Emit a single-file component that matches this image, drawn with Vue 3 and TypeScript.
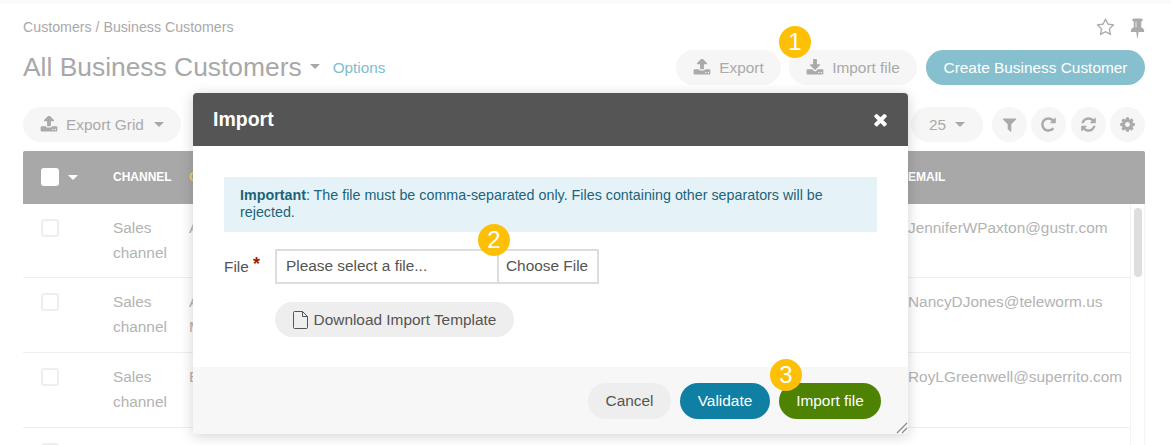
<script setup lang="ts">
const icons: Record<string, string> = {
  upload: 'M1344 1344q0-26-19-45t-45-19-45 19-19 45 19 45 45 19 45-19 19-45zm256 0q0-26-19-45t-45-19-45 19-19 45 19 45 45 19 45-19 19-45zm128-224v320q0 40-28 68t-68 28h-1472q-40 0-68-28t-28-68v-320q0-40 28-68t68-28h427q21 56 70.5 92t110.5 36h256q61 0 110.5-36t70.5-92h427q40 0 68 28t28 68zm-325-648q-17 40-59 40h-256v448q0 26-19 45t-45 19h-256q-26 0-45-19t-19-45v-448h-256q-42 0-59-40-17-39 14-69l448-448q19-19 45-19t45 19l448 448q31 30 14 69z',
  download: 'M1344 1344q0-26-19-45t-45-19-45 19-19 45 19 45 45 19 45-19 19-45zm256 0q0-26-19-45t-45-19-45 19-19 45 19 45 45 19 45-19 19-45zm128-224v320q0 40-28 68t-68 28h-1472q-40 0-68-28t-28-68v-320q0-40 28-68t68-28h465l135 136q58 56 136 56t136-56l136-136h464q40 0 68 28t28 68zm-325-569q17 41-14 70l-448 448q-18 19-45 19t-45-19l-448-448q-31-29-14-70 17-39 59-39h256v-448q0-26 19-45t45-19h256q26 0 45 19t19 45v448h256q42 0 59 39z',
  filter: 'M1595 295q17 41-14 70l-493 493v742q0 42-39 59-13 5-25 5-27 0-45-19l-256-256q-19-19-19-45v-486l-493-493q-31-29-14-70 17-39 59-39h1280q42 0 59 39z',
  repeat: 'M1664 256v448q0 26-19 45t-45 19h-448q-42 0-59-40-17-39 14-69l138-138q-148-137-349-137-104 0-198.5 40.5t-163.5 109.5-109.5 163.5-40.5 198.5 40.5 198.5 109.5 163.5 163.5 109.5 198.5 40.5q119 0 225-52t179-147q7-10 23-12 15 0 25 9l137 138q9 8 9.5 20.5t-7.5 22.5q-109 132-264 204.5t-327 72.5q-156 0-298-61t-245-164-164-245-61-298 61-298 164-245 245-164 298-61q147 0 284.5 55.5t244.5 156.5l130-129q29-31 70-14 39 17 39 59z',
  refresh: 'M1639 1056q0 5-1 7-64 268-268 434.5t-478 166.5q-146 0-282.5-55t-243.5-157l-129 129q-19 19-45 19t-45-19-19-45v-448q0-26 19-45t45-19h448q26 0 45 19t19 45-19 45l-137 137q71 66 161 102t187 36q134 0 250-65t186-179q11-17 53-117 8-23 30-23h192q13 0 22.5 9.5t9.5 22.5zm25-800v448q0 26-19 45t-45 19h-448q-26 0-45-19t-19-45 19-45l138-138q-148-137-349-137-134 0-250 65t-186 179q-11 17-53 117-8 23-30 23h-199q-13 0-22.5-9.5t-9.5-22.5v-7q65-268 270-434.5t480-166.5q146 0 284 55.5t245 156.5l130-129q19-19 45-19t45 19 19 45z',
  cog: 'M1152 896q0-106-75-181t-181-75-181 75-75 181 75 181 181 75 181-75 75-181zm512-109v222q0 12-8 23t-20 13l-185 28q-19 54-39 91 35 50 107 138 10 12 10 25t-9 23q-27 37-99 108t-94 71q-12 0-26-9l-138-108q-44 23-91 38-16 136-29 186-7 28-36 28h-222q-14 0-24.5-8.5t-11.5-21.5l-28-184q-49-16-90-37l-141 107q-10 9-25 9-14 0-25-11-126-114-165-168-7-10-7-23 0-12 8-23 15-21 51-66.5t54-70.5q-27-50-41-99l-183-27q-13-2-21-12.5t-8-23.5v-222q0-12 8-23t19-13l186-28q14-46 39-92-40-57-107-138-10-12-10-24 0-10 9-23 26-36 98.5-107.5t94.5-71.5q13 0 26 10l138 107q44-23 91-38 16-136 29-186 7-28 36-28h222q14 0 24.5 8.5t11.5 21.5l28 184q49 16 90 37l142-107q9-9 24-9 13 0 25 10 129 119 165 170 7 8 7 22 0 12-8 23-15 21-51 66.5t-54 70.5q26 50 41 98l183 28q13 2 21 12.5t8 23.5z',
  times: 'M1490 1322q0 40-28 68l-136 136q-28 28-68 28t-68-28l-294-294-294 294q-28 28-68 28t-68-28l-136-136q-28-28-28-68t28-68l294-294-294-294q-28-28-28-68t28-68l136-136q28-28 68-28t68 28l294 294 294-294q28-28 68-28t68 28l136 136q28 28 28 68t-28 68l-294 294 294 294q28 28 28 68z',
  star: 'M1201 1004l306-297-422-62-189-382-189 382-422 62 306 297-73 421 378-199 377 199zm527-357q0 22-26 48l-363 354 86 500q1 7 1 20 0 50-41 50-19 0-40-12l-449-236-449 236q-22 12-40 12-21 0-31.5-14.5t-10.5-35.5q0-6 2-20l86-500-364-354q-25-27-25-48 0-37 56-46l502-73 225-455q19-41 49-41t49 41l225 455 502 73q56 9 56 46z',
  pin: 'M800 864v-448q0-14-9-23t-23-9-23 9-9 23v448q0 14 9 23t23 9 23-9 9-23zm672 352q0 26-19 45t-45 19h-429l-51 483q-2 12-10.5 20.5t-20.5 8.5h-1q-27 0-32-27l-76-485h-404q-26 0-45-19t-19-45q0-123 78.5-221.5t177.5-98.5v-512q-52 0-90-38t-38-90 38-90 90-38h640q52 0 90 38t38 90-38 90-90 38v512q99 0 177.5 98.5t78.5 221.5z'
}

const toolIcons = ['filter', 'repeat', 'refresh', 'cog']

interface Customer {
  company: string[]
  email: string
}

const customers: Customer[] = [
  { company: ['Abbott'], email: 'JenniferWPaxton@gustr.com' },
  { company: ['Acme', 'Media'], email: 'NancyDJones@teleworm.us' },
  { company: ['Evans'], email: 'RoyLGreenwell@superrito.com' },
  { company: [], email: '' }
]
</script>

<template>
  <div class="app">
    <div class="page">
      <div class="top">
        <div class="crumbs">Customers / Business Customers</div>
        <div class="top-icons">
          <svg class="ico star" viewBox="0 0 1792 1792"><path :d="icons.star" /></svg>
          <svg class="ico pin" viewBox="0 0 1792 1792"><path :d="icons.pin" /></svg>
        </div>
      </div>

      <div class="head">
        <h1>All Business Customers</h1>
        <span class="caret title-caret"></span>
        <a class="options">Options</a>
        <div class="head-actions">
          <button class="btn btn-export">
            <svg class="ico" viewBox="0 0 1792 1792"><path :d="icons.upload" /></svg>
            Export
          </button>
          <button class="btn btn-import">
            <svg class="ico" viewBox="0 0 1792 1792"><path :d="icons.download" /></svg>
            Import file
          </button>
          <button class="btn btn-create">Create Business Customer</button>
        </div>
      </div>

      <div class="toolbar">
        <button class="btn btn-grid">
          <svg class="ico" viewBox="0 0 1792 1792"><path :d="icons.upload" /></svg>
          Export Grid
          <span class="caret"></span>
        </button>
        <div class="tools">
          <button class="btn btn-size">25 <span class="caret"></span></button>
          <button v-for="name in toolIcons" :key="name" class="btn-round">
            <svg class="ico" viewBox="0 0 1792 1792"><path :d="icons[name]" /></svg>
          </button>
        </div>
      </div>

      <div class="grid">
        <div class="grid-head">
          <div class="col-check">
            <span class="check check-head"></span>
            <span class="caret caret-white"></span>
          </div>
          <div class="col-channel">CHANNEL</div>
          <div class="col-company">COMPANY</div>
          <div class="col-email">EMAIL</div>
        </div>
        <div class="grid-body">
          <div class="rows">
            <div v-for="(c, i) in customers" :key="i" class="row">
              <div class="col-check"><span class="check"></span></div>
              <div v-if="c.email" class="col-channel">Sales channel</div>
              <div class="col-company">
                <div v-for="line in c.company" :key="line">{{ line }}</div>
              </div>
              <div class="col-email">{{ c.email }}</div>
            </div>
          </div>
          <div class="scroll"><div class="thumb"></div></div>
        </div>
      </div>
    </div>

    <div class="modal">
      <div class="modal-head">
        <span>Import</span>
        <svg class="ico close" viewBox="0 0 1792 1792"><path :d="icons.times" /></svg>
      </div>
      <div class="modal-body">
        <div class="alert">
          <strong>Important</strong>: The file must be comma-separated only. Files containing other separators will be rejected.
        </div>
        <div class="file-row">
          <label>File <span class="req">*</span></label>
          <div class="file-input">
            <div class="file-name">Please select a file...</div>
            <div class="file-choose">Choose File</div>
          </div>
        </div>
        <button class="btn-template">
          <svg class="file-ico" viewBox="0 0 15 18">
            <path d="M.5 1.5a1 1 0 0 1 1-1h8l5 5v11a1 1 0 0 1-1 1h-12a1 1 0 0 1-1-1z M9.5.5v5h5" />
          </svg>
          Download Import Template
        </button>
      </div>
      <div class="modal-foot">
        <button class="foot-btn cancel">Cancel</button>
        <button class="foot-btn validate">Validate</button>
        <button class="foot-btn import">Import file</button>
        <svg class="grip" viewBox="0 0 12 12">
          <path d="M1 11 11 1 M6 11 11 6" />
        </svg>
      </div>
    </div>

    <span class="badge badge-1">1</span>
    <span class="badge badge-2">2</span>
    <span class="badge badge-3">3</span>
  </div>
</template>

<style>
html,
body {
  margin: 0;
  background: #fff;
}
</style>

<style scoped>
.app {
  position: relative;
  width: 1171px;
  height: 445px;
  overflow: hidden;
  background: #fff;
  font-family: "Liberation Sans", Arial, sans-serif;
  font-size: 15.4px;
}

button {
  font-family: inherit;
  border: none;
  padding: 0;
}

.page {
  border-top: 4px solid #fafafa;
  padding: 0 26px 0 23px;
  color: #b0b0b0;
}

.ico {
  fill: currentColor;
  flex: none;
}

.top {
  display: flex;
  justify-content: space-between;
  align-items: center;
  height: 46px;
}

.crumbs {
  font-size: 14.2px;
  color: #a9a9a9;
}

.top-icons {
  display: flex;
  align-items: center;
  gap: 12px;
  color: #ababab;
}

.star {
  width: 19px;
  height: 19px;
}

.pin {
  width: 21px;
  height: 21px;
  margin-right: -3px;
}

.head {
  display: flex;
  align-items: center;
  height: 35px;
}

h1 {
  margin: 0;
  font-size: 26.4px;
  font-weight: 400;
  color: #a8a8a8;
}

.caret {
  display: inline-block;
  width: 0;
  height: 0;
  border-left: 5.5px solid transparent;
  border-right: 5.5px solid transparent;
  border-top: 5.5px solid #a8a8a8;
}

.title-caret {
  margin: 0 0 2px 8px;
}

.options {
  margin-left: 13px;
  font-size: 15.3px;
  color: #7fbdd1;
}

.head-actions {
  margin-left: auto;
  display: flex;
  gap: 8px;
}

.btn {
  display: flex;
  align-items: center;
  justify-content: center;
  height: 35px;
  border-radius: 18px;
  background: #f6f6f6;
  color: #aaa;
  font-size: 15.4px;
}

.btn .ico {
  width: 18px;
  height: 18px;
}

.btn-export {
  width: 105px;
  gap: 8px;
}

.btn-import {
  width: 128px;
  gap: 8px;
}

.btn-create {
  width: 219px;
  margin-left: 1px;
  background: #86bfce;
  color: #fff;
}

.toolbar {
  display: flex;
  justify-content: space-between;
  align-items: center;
  margin-top: 22px;
}

.btn-grid {
  width: 158px;
  gap: 8px;
}

.btn-grid .caret {
  margin-left: 2px;
}

.tools {
  display: flex;
  gap: 4.33px;
}

.btn-size {
  width: 72px;
  gap: 9px;
  margin-right: 4.67px;
}

.btn-round {
  display: flex;
  align-items: center;
  justify-content: center;
  width: 35px;
  height: 35px;
  border-radius: 50%;
  background: #f6f6f6;
  color: #aaa;
}

.btn-round .ico {
  width: 17px;
  height: 17px;
}

.grid {
  margin-top: 9px;
}

.grid-head {
  display: flex;
  align-items: center;
  height: 53px;
  padding-bottom: 1px;
  box-sizing: border-box;
  background: #a8a8a8;
  border-radius: 2px 2px 0 0;
  color: #fff;
  font-size: 12px;
  font-weight: 700;
}

.col-check {
  flex: none;
  display: flex;
  align-items: center;
  gap: 9px;
  width: 90px;
  padding-left: 18px;
  box-sizing: border-box;
}

.col-channel {
  flex: none;
  width: 76px;
}

.col-company {
  flex: none;
  width: 719px;
}

.grid-head .col-company {
  color: #efcf7a;
}

.grid-body {
  display: flex;
}

.rows {
  flex: 1;
  min-width: 0;
}

.row {
  display: flex;
  align-items: flex-start;
  height: 75px;
  box-sizing: border-box;
  padding-top: 11px;
  border-bottom: 1px solid #efefef;
  line-height: 25px;
  color: #b3b3b3;
}

.row:first-child {
  height: 74px;
}

.row .col-check {
  padding-top: 4px;
}

.check {
  display: block;
  width: 18px;
  height: 18px;
  box-sizing: border-box;
  background: #fff;
  border: 2px solid #eee;
  border-radius: 3px;
}

.check-head {
  border-color: #fff;
}

.caret-white {
  border-top-color: #fff;
  margin-left: 0;
}

.scroll {
  flex: none;
  width: 15px;
  border-left: 1px solid #f3f3f3;
  border-right: 1px solid #f3f3f3;
  box-sizing: border-box;
  padding: 4px 3px;
}

.thumb {
  width: 8px;
  height: 69px;
  border-radius: 4px;
  background: #dedede;
}

.modal {
  position: absolute;
  left: 193px;
  top: 93px;
  width: 715px;
  height: 341px;
  display: flex;
  flex-direction: column;
  border-radius: 4px;
  background: #fff;
  box-shadow: 0 2px 14px rgba(0, 0, 0, 0.18);
  overflow: hidden;
}

.modal-head {
  display: flex;
  justify-content: space-between;
  align-items: center;
  height: 53px;
  flex: none;
  padding: 0 20px;
  background: #555;
  color: #fff;
  font-size: 19.5px;
  font-weight: 700;
}

.close {
  width: 19px;
  height: 19px;
  margin-right: -1.5px;
}

.modal-body {
  flex: 1;
  padding: 31px 31px 0;
}

.alert {
  padding: 10px 16px 0;
  height: 55px;
  box-sizing: border-box;
  background: #e5f3f8;
  color: #1c6379;
  font-size: 14.3px;
  line-height: 17px;
}

.file-row {
  display: flex;
  align-items: center;
  margin-top: 17px;
  color: #555;
}

label {
  width: 51px;
  flex: none;
  font-size: 15.4px;
}

.req {
  color: #a51c00;
  font-weight: 700;
  font-size: 18px;
  line-height: 0;
  vertical-align: 2px;
}

.file-input {
  display: flex;
  width: 324px;
  height: 35px;
  box-sizing: border-box;
  border: 2px solid #ddd;
  font-size: 15.4px;
  line-height: 29px;
}

.file-name {
  width: 222px;
  padding-left: 9px;
  box-sizing: border-box;
  border-right: 2px solid #ddd;
}

.file-choose {
  flex: 1;
  padding-left: 7px;
}

.btn-template {
  display: flex;
  align-items: center;
  justify-content: center;
  gap: 6px;
  width: 239px;
  height: 35px;
  margin: 18px 0 0 51px;
  border-radius: 18px;
  background: #eee;
  color: #555;
  font-size: 15.4px;
}

.file-ico {
  width: 15px;
  height: 18px;
  fill: none;
  stroke: #555;
  stroke-width: 1;
}

.modal-foot {
  position: relative;
  display: flex;
  justify-content: flex-end;
  align-items: center;
  gap: 9px;
  height: 67px;
  flex: none;
  padding-right: 27px;
  background: #f7f7f7;
}

.foot-btn {
  height: 36px;
  border-radius: 18px;
  font-size: 15.4px;
}

.cancel {
  width: 83px;
  background: #eee;
  color: #555;
}

.validate {
  width: 90px;
  background: #0f7fa3;
  color: #fff;
}

.import {
  width: 102px;
  background: #4d8203;
  color: #fff;
}

.grip {
  position: absolute;
  right: 0;
  bottom: 0;
  width: 12px;
  height: 12px;
  fill: none;
  stroke: #888;
  stroke-width: 1.2;
}

.badge {
  position: absolute;
  display: flex;
  align-items: center;
  justify-content: center;
  width: 32px;
  height: 32px;
  border-radius: 50%;
  background: #fdc006;
  color: #fff;
  font-size: 24px;
}

.badge-1 {
  left: 779px;
  top: 26px;
}

.badge-2 {
  left: 478px;
  top: 224px;
}

.badge-3 {
  left: 770px;
  top: 359px;
}
</style>
